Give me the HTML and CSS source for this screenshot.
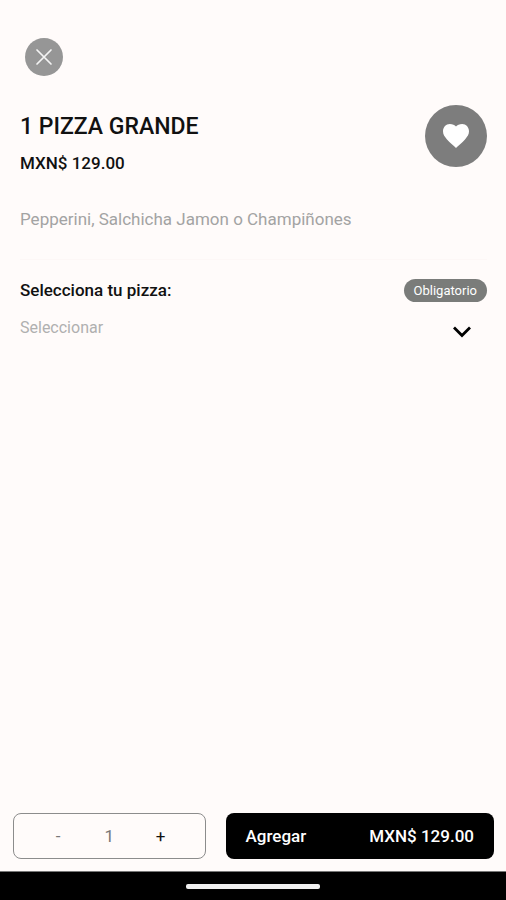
FILE: index.html
```
<!DOCTYPE html>
<html lang="es">

<head>
    <meta charset="UTF-8">
    <meta name="viewport" content="width=device-width, initial-scale=1.0">
    <title>1 Pizza Grande</title>
    <link rel="stylesheet" href="styles.css">
</head>

<body>
    <main class="content">
        <button type="button" class="close-btn" aria-label="Cerrar">
            <svg width="18" height="18" viewBox="0 0 18 18">
                <path d="M2 2L16 16M16 2L2 16" fill="none" stroke="#f4f4f4" stroke-width="1.700" stroke-linecap="round"/>
            </svg>
        </button>

        <div class="product">
            <div class="product-info">
                <h1>1 PIZZA GRANDE</h1>
                <p class="price">MXN$ 129.00</p>
            </div>
            <button type="button" class="fav-btn" aria-label="Favorito">
                <svg width="28" height="26" viewBox="0 0 28 26">
                    <path d="M14 25C12 23 8 20 5 16.500C2.500 13.600 1 11.300 1 8.300C1 4.200 4 1 7.800 1C10.500 1 12.800 2 14 3.600C15.200 2 17.500 1 20.200 1C24 1 27 4.200 27 8.300C27 11.300 25.500 13.600 23 16.500C20 20 16 23 14 25Z" fill="#fff"/>
                </svg>
            </button>
        </div>

        <p class="description">Pepperini, Salchicha Jamon o Champiñones</p>

        <form class="options" id="orderForm">
            <div class="options-header">
                <label for="pizza">Selecciona tu pizza:</label>
                <span class="badge">Obligatorio</span>
            </div>
            <div class="select-box">
                <select id="pizza" name="pizza" required>
                    <option value="">Seleccionar</option>
                    <option value="pepperoni">Pepperini</option>
                    <option value="salchicha">Salchicha</option>
                    <option value="jamon">Jamon</option>
                    <option value="champinones">Champiñones</option>
                </select>
                <svg class="arrow" width="20" height="14" viewBox="0 0 20 14">
                    <path d="M2 2.500L10 10.500L18 2.500" fill="none" stroke="#000" stroke-width="2.800"/>
                </svg>
            </div>
        </form>
    </main>

    <footer>
        <div class="actions">
            <div class="quantity">
                <button type="button" class="minus" aria-label="Quitar uno">-</button>
                <output>1</output>
                <button type="button" aria-label="Agregar uno">+</button>
            </div>
            <button type="submit" form="orderForm" class="add-btn">
                <span>Agregar</span>
                <span>MXN$ 129.00</span>
            </button>
        </div>
        <div class="nav-bar">
            <div class="nav-handle"></div>
        </div>
    </footer>
</body>

</html>
```
FILE: styles.css
```
* {
    box-sizing: border-box;
}

body {
    margin: 0;
    min-height: 100vh;
    display: flex;
    flex-direction: column;
    background-color: #fffbfa;
    color: #111111;
    font-family: Roboto, sans-serif;
    font-size: 17px;
    line-height: 24px;
}

h1, p {
    margin: 0;
}

button {
    padding: 0;
    border: none;
    background: none;
    color: inherit;
    font: inherit;
    cursor: pointer;
}

.content {
    flex: 1;
    padding: 38px 19px 0 20px;
}

.close-btn {
    display: flex;
    align-items: center;
    justify-content: center;
    width: 38px;
    height: 38px;
    margin-left: 5px;
    border-radius: 50%;
    background-color: #969696;
}

.product {
    display: flex;
    justify-content: space-between;
    margin-top: 29px;
}

.product-info {
    padding-top: 8px;
}

h1 {
    font-size: 23px;
    font-weight: 500;
    line-height: 28px;
}

.price {
    margin-top: 10px;
    font-weight: 500;
}

.fav-btn {
    display: flex;
    align-items: center;
    justify-content: center;
    width: 62px;
    height: 62px;
    border-radius: 50%;
    background-color: #7d7d7d;
}

.description {
    margin-top: 32px;
    padding-bottom: 28px;
    border-bottom: 1px solid #fdf7f6;
    color: #a3a3a3;
}

.options {
    padding-top: 18px;
}

.options-header {
    display: flex;
    align-items: center;
    justify-content: space-between;
}

.options-header label {
    font-weight: 500;
}

.badge {
    padding: 0 10px;
    border-radius: 12px;
    background-color: #7a7c7a;
    color: #ffffff;
    font-size: 13px;
    line-height: 23px;
}

.select-box {
    position: relative;
    margin-top: 10px;
}

select {
    display: block;
    width: 100%;
    height: 32px;
    padding: 0;
    border: none;
    appearance: none;
    background: none;
    color: #b0b0b0;
    font: inherit;
    font-size: 16px;
}

.arrow {
    position: absolute;
    top: 13px;
    right: 15px;
    pointer-events: none;
}

.actions {
    display: grid;
    grid-template-columns: 193fr 269fr;
    gap: 20px;
    padding: 0 12px 12px 13px;
}

.quantity {
    display: flex;
    align-items: center;
    justify-content: space-between;
    height: 46px;
    padding: 0 30px;
    border: 1px solid #8c8c8c;
    border-radius: 8px;
}

.quantity button {
    width: 28px;
    height: 44px;
}

.quantity .minus,
.quantity output {
    color: #777777;
}

.add-btn {
    display: flex;
    align-items: center;
    justify-content: space-between;
    height: 46px;
    padding: 0 20px;
    border-radius: 8px;
    background-color: #000000;
    color: #ffffff;
    font-weight: 500;
}

.nav-bar {
    display: flex;
    align-items: center;
    justify-content: center;
    height: 29px;
    border-top: 1px solid #777777;
    background-color: #000000;
}

.nav-handle {
    width: 134px;
    height: 5px;
    border-radius: 2px;
    background-color: #f0f0f0;
}
```
